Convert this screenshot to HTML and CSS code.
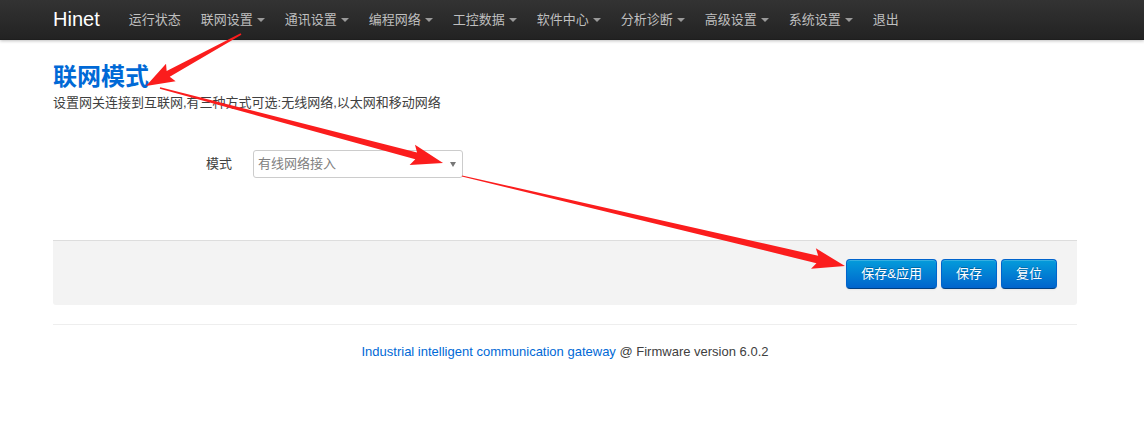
FILE: index.html
```html
<!DOCTYPE html>
<html lang="zh-CN">
<head>
<meta charset="utf-8">
<title>Hinet</title>
<link rel="stylesheet" href="styles.css">
</head>
<body>
<header class="topbar">
  <div class="container topbar-inner">
    <a class="brand" href="#">Hinet</a>
    <ul class="nav">
      <li><a href="#">运行状态</a></li>
      <li><a href="#" class="dropdown">联网设置<span class="caret"></span></a></li>
      <li><a href="#" class="dropdown">通讯设置<span class="caret"></span></a></li>
      <li><a href="#" class="dropdown">编程网络<span class="caret"></span></a></li>
      <li><a href="#" class="dropdown">工控数据<span class="caret"></span></a></li>
      <li><a href="#" class="dropdown">软件中心<span class="caret"></span></a></li>
      <li><a href="#" class="dropdown">分析诊断<span class="caret"></span></a></li>
      <li><a href="#" class="dropdown">高级设置<span class="caret"></span></a></li>
      <li><a href="#" class="dropdown">系统设置<span class="caret"></span></a></li>
      <li><a href="#">退出</a></li>
    </ul>
  </div>
</header>

<main class="container main">
  <h2 class="page-title">联网模式</h2>
  <p class="page-desc">设置网关连接到互联网,有三种方式可选:无线网络,以太网和移动网络</p>

  <div class="cbi-value">
    <label class="cbi-title" for="mode">模式</label>
    <div class="cbi-field">
      <div class="select-wrap">
        <select id="mode" class="select">
          <option>有线网络接入</option>
        </select>
      </div>
    </div>
  </div>

  <div class="actions">
    <button class="btn">保存&amp;应用</button>
    <button class="btn">保存</button>
    <button class="btn">复位</button>
  </div>

  <footer class="footer">
    <a href="#">Industrial intelligent communication gateway</a> @ Firmware version 6.0.2
  </footer>
</main>

<svg class="annotations" width="1144" height="444" viewBox="0 0 1144 444" aria-hidden="true">
  <g fill="#fb1d1d">
    <polygon transform="translate(241,34) rotate(151.3)" points="0,-0.8 83,-3.2 80,-10 108.3,0 80,10 83,3.2 0,0.8"/>
    <polygon transform="translate(160,88) rotate(14.84)" points="0,-0.8 265,-3.4 261,-10.5 292.8,0 261,10.5 265,3.4 0,0.8"/>
    <polygon transform="translate(462,176) rotate(13.22)" points="0,-0.6 365,-3.8 361,-10.5 393.4,0 361,10.5 365,3.8 0,0.6"/>
  </g>
</svg>
</body>
</html>
```

FILE: styles.css
```css
* { box-sizing: border-box; }

html, body {
  margin: 0;
  padding: 0;
}

body {
  position: relative;
  background: #fff;
  color: #404040;
  font-family: "Liberation Sans", "Noto Sans CJK SC", Arial, sans-serif;
  font-size: 13px;
  line-height: 18px;
}

a { color: #0069d6; text-decoration: none; }

.container {
  width: 1024px;
  margin-left: 53px;
}

/* top bar */
.topbar {
  height: 40px;
  background: linear-gradient(to bottom, #333333, #222222);
  box-shadow: 0 1px 3px rgba(0, 0, 0, 0.25), 0 -1px 0 rgba(0, 0, 0, 0.1) inset;
}

.topbar-inner {
  display: flex;
  align-items: center;
  height: 40px;
}

.brand {
  color: #fff;
  font-size: 20px;
  line-height: 20px;
  padding-right: 19px;
  margin-top: -3px;
  font-family: "Liberation Sans", Arial, sans-serif;
}

.nav {
  display: flex;
  list-style: none;
  margin: 0;
  padding: 0;
}

.nav a {
  display: flex;
  align-items: center;
  padding: 0 10px;
  height: 40px;
  color: #bfbfbf;
  font-size: 13px;
  line-height: 19px;
  margin-top: -2px;
}

.caret {
  display: inline-block;
  width: 0;
  height: 0;
  margin-left: 4px;
  margin-top: 2px;
  border-left: 4px solid transparent;
  border-right: 4px solid transparent;
  border-top: 4px solid #9a9a9a;
}

/* main */
.main {
  padding-top: 22px;
}

.page-title {
  margin: 0;
  color: #0069d6;
  font-size: 24px;
  line-height: 30px;
  font-weight: bold;
}

.page-desc {
  margin: 2px 0 0;
  line-height: 18px;
}

.cbi-value {
  display: flex;
  align-items: center;
  margin-top: 38px;
  height: 28px;
}

.cbi-title {
  width: 180px;
  text-align: right;
  padding-right: 1px;
  color: #404040;
}

.cbi-field {
  margin-left: 20px;
}

.select-wrap {
  position: relative;
  width: 210px;
  height: 28px;
}

.select-wrap::after {
  content: "";
  position: absolute;
  right: 7px;
  top: 12px;
  border-left: 3px solid transparent;
  border-right: 3px solid transparent;
  border-top: 5px solid #777;
  pointer-events: none;
}

.select {
  appearance: none;
  -webkit-appearance: none;
  width: 210px;
  height: 28px;
  padding: 0 20px 0 4px;
  border: 1px solid #cccccc;
  border-radius: 3px;
  background: #fff;
  color: #808080;
  font-family: inherit;
  font-size: 13px;
  line-height: 18px;
}

/* action bar */
.actions {
  display: flex;
  justify-content: flex-end;
  gap: 4px;
  margin-top: 62px;
  height: 65px;
  padding: 18px 20px 0 0;
  background: #f3f3f3;
  border-top: 1px solid #dddddd;
  border-radius: 0 0 3px 3px;
}

.btn {
  height: 30px;
  padding: 0 14px;
  border: 1px solid #0064cd;
  border-bottom-color: #003f81;
  border-radius: 4px;
  background: linear-gradient(to bottom, #049cdb, #0064cd);
  color: #fff;
  font-family: inherit;
  font-size: 13px;
  line-height: 18px;
  text-shadow: 0 -1px 0 rgba(0, 0, 0, 0.25);
  box-shadow: inset 0 1px 0 rgba(255, 255, 255, 0.2), 0 1px 2px rgba(0, 0, 0, 0.05);
  cursor: pointer;
}

/* footer */
.footer {
  margin-top: 19px;
  padding-top: 18px;
  border-top: 1px solid #eeeeee;
  text-align: center;
  line-height: 18px;
}

/* annotation arrows drawn over the screenshot */
.annotations {
  position: absolute;
  left: 0;
  top: 0;
  pointer-events: none;
}
```
